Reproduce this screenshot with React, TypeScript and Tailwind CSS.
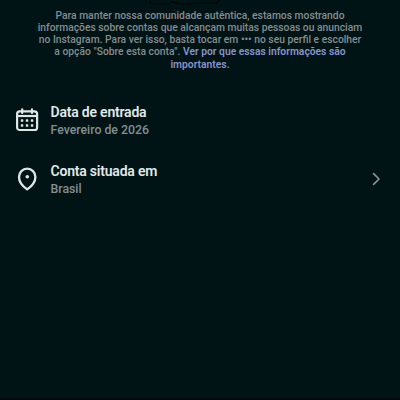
import React from "react";

interface InfoRowProps {
  icon: React.ReactNode;
  title: string;
  value: string;
  showChevron?: boolean;
}

const CalendarIcon = () => (
  <svg width="24" height="26" viewBox="0 0 24 26" fill="none" aria-hidden="true">
    <rect x="2.1" y="3.4" width="20" height="18.6" rx="2.6" stroke="#dfe6e6" strokeWidth="2.2" />
    <path d="M2.1 8h20" stroke="#dfe6e6" strokeWidth="2.2" />
    <path d="M7.2 1.3v3.6M17 1.3v3.6" stroke="#dfe6e6" strokeWidth="2.2" strokeLinecap="round" />
    <g fill="#dfe6e6">
      <rect x="5.8" y="11.3" width="2.5" height="2.5" rx="0.6" />
      <rect x="10.8" y="11.3" width="2.5" height="2.5" rx="0.6" />
      <rect x="15.8" y="11.3" width="2.5" height="2.5" rx="0.6" />
      <rect x="5.8" y="16.2" width="2.5" height="2.5" rx="0.6" />
      <rect x="10.8" y="16.2" width="2.5" height="2.5" rx="0.6" />
      <rect x="15.8" y="16.2" width="2.5" height="2.5" rx="0.6" />
    </g>
  </svg>
);

const PinIcon = () => (
  <svg width="24" height="26" viewBox="0 0 24 26" fill="none" aria-hidden="true">
    <path
      d="M12.2 22.4C9.4 20.4 4 15.5 4 9.9a8.2 8.2 0 0 1 16.4 0c0 5.6-5.4 10.5-8.2 12.5Z"
      stroke="#dfe6e6"
      strokeWidth="2.3"
      strokeLinejoin="round"
    />
    <circle cx="12.3" cy="9.8" r="1.8" fill="#dfe6e6" />
  </svg>
);

const InfoRow = ({ icon, title, value, showChevron = false }: InfoRowProps) => {
  return (
    <div className="flex h-[59px] items-start pl-[15px] pr-[18px]">
      <div className="mt-[5px] w-[35.5px] shrink-0">{icon}</div>
      <div className="flex-1">
        <p className="text-[14px] leading-[18px] font-semibold tracking-[-0.21px] text-[#e1e8e8]">{title}</p>
        <p className="text-[12.3px] leading-[18px] font-medium text-[#858d90]">{value}</p>
      </div>
      {showChevron && (
        <svg className="mt-[9px]" width="11" height="16" viewBox="0 0 11 16" fill="none" aria-hidden="true">
          <path
            d="M2.6 2.6 8 8l-5.4 5.4"
            stroke="#8a9294"
            strokeWidth="1.7"
            strokeLinecap="round"
            strokeLinejoin="round"
          />
        </svg>
      )}
    </div>
  );
};

const App = () => {
  return (
    <main className="flex h-[400px] w-[400px] flex-col overflow-hidden border-b-2 border-[#000a0d] bg-[#001416] font-['Roboto',sans-serif]">
      {/* Faint edge of the content scrolled out above */}
      <svg className="ml-[148px] shrink-0" width="76" height="7" viewBox="0 0 76 7" fill="none" aria-hidden="true">
        <path d="M2 0v3l6 1h12l4-2 8 2h10l6-1h20l4-3" stroke="#000405" strokeWidth="1.2" />
      </svg>

      <div className="pt-[2.5px] text-center text-[10.3px] leading-[12.3px] font-medium whitespace-nowrap text-[#858d90]">
        <p>Para manter nossa comunidade autêntica, estamos mostrando</p>
        <p>informações sobre contas que alcançam muitas pessoas ou anunciam</p>
        <p>no Instagram. Para ver isso, basta tocar em ••• no seu perfil e escolher</p>
        <p>
          a opção "Sobre esta conta".{" "}
          <a className="font-semibold text-[#8793cb]">Ver por que essas informações são</a>
        </p>
        <p>
          <a className="font-semibold text-[#8793cb]">importantes.</a>
        </p>
      </div>

      <div className="mt-8">
        <InfoRow icon={<CalendarIcon />} title="Data de entrada" value="Fevereiro de 2026" />
        <InfoRow icon={<PinIcon />} title="Conta situada em" value="Brasil" showChevron />
      </div>
    </main>
  );
};

export default App;
